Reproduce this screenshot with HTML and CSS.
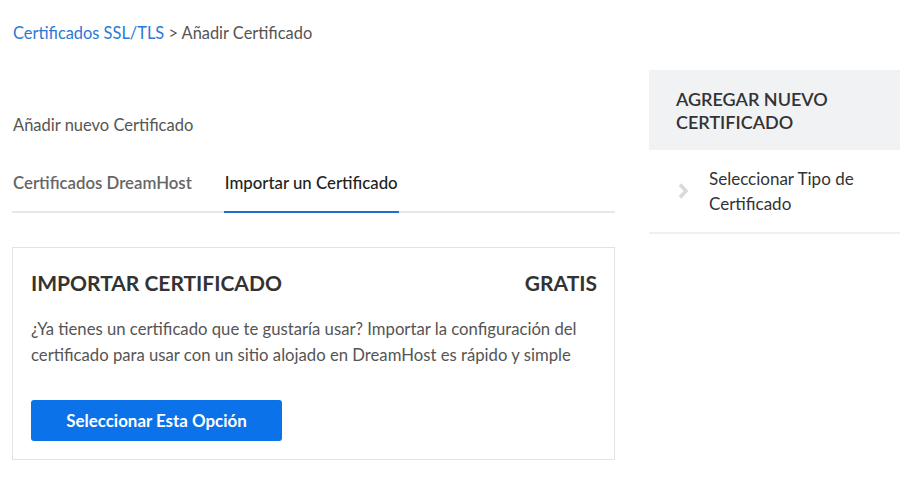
FILE: index.html
```html
<!DOCTYPE html>
<html>
<head>
  <title>Añadir Certificado</title>
  <link rel="stylesheet" href="styles.css">
</head>
<body>
  <div class="breadcrumb">
    <a href="#" class="crumb-link">Certificados SSL/TLS</a> &gt; Añadir Certificado
  </div>
  <div class="layout">
    <div class="main">
      <p class="subtitle">Añadir nuevo Certificado</p>
      <div class="tabs">
        <a href="#" class="tab">Certificados DreamHost</a>
        <a href="#" class="tab active">Importar un Certificado</a>
      </div>
      <div class="card">
        <div class="card-head">
          <h3>IMPORTAR CERTIFICADO</h3>
          <span class="price">GRATIS</span>
        </div>
        <p class="card-text">¿Ya tienes un certificado que te gustaría usar? Importar la configuración del certificado para usar con un sitio alojado en DreamHost es rápido y simple</p>
        <button type="button" class="btn">Seleccionar Esta Opción</button>
      </div>
    </div>
    <aside class="sidebar">
      <div class="side-head">AGREGAR NUEVO CERTIFICADO</div>
      <div class="side-step">
        <svg class="chevron" width="11" height="18" viewBox="0 0 11 18">
          <path d="M2 2.5 L8 9 L2 15.5" fill="none" stroke="#d9d9d9" stroke-width="3.6"/>
        </svg>
        <span>Seleccionar Tipo de Certificado</span>
      </div>
    </aside>
  </div>
</body>
</html>
```
FILE: styles.css
```css
body {
  font-family: Lato, "Open Sans", sans-serif;
  margin: 0;
  padding: 0;
  color: #555;
  background: #fff;
  overflow: hidden;
}
.breadcrumb {
  padding: 23px 0 0 13px;
  font-size: 16.4px;
  height: 47px;
  box-sizing: border-box;
}
.crumb-link {
  color: #2c78d4;
  text-decoration: none;
}
.layout {
  display: flex;
  gap: 34px;
}
.main {
  width: 603px;
  flex-shrink: 0;
  margin-left: 12px;
}
.subtitle {
  margin: 68px 0 0 1px;
  font-size: 16.5px;
  line-height: 20px;
  color: #555;
}
.tabs {
  display: flex;
  gap: 31px;
  margin-top: 38px;
  border-bottom: 2px solid #e8e8e8;
}
.tab {
  font-size: 16.8px;
  font-weight: 600;
  color: #666;
  text-decoration: none;
  padding: 0 1px 18px 1px;
  line-height: 20px;
  margin-bottom: -2px;
}
.tab.active {
  color: #222;
  font-weight: 500;
  border-bottom: 2px solid #1e6fd0;
}
.card {
  margin-top: 34px;
  border: 1px solid #e3e3e3;
  padding: 22px 17px 18px 18px;
}
.card-head {
  display: flex;
  justify-content: space-between;
  align-items: center;
}
.card-head h3 {
  margin: 0;
  font-size: 21px;
  font-weight: 700;
  color: #333;
}
.price {
  font-size: 21px;
  font-weight: 700;
  color: #333;
}
.card-text {
  margin: 21px 0 0 0;
  font-size: 16.7px;
  line-height: 26px;
  color: #555;
}
.btn {
  margin-top: 32px;
  width: 251px;
  height: 41px;
  background: #0b72e9;
  color: #fff;
  border: none;
  border-radius: 3px;
  font-family: inherit;
  font-size: 16.9px;
  font-weight: 700;
  cursor: pointer;
}
.sidebar {
  width: 260px;
  flex-shrink: 0;
  margin-top: 23px;
}
.side-head {
  background: #f1f2f4;
  padding: 18px 27px 16px 27px;
  font-size: 18px;
  font-weight: 600;
  line-height: 23px;
  color: #333;
}
.side-step {
  display: flex;
  align-items: center;
  gap: 20px;
  padding: 16px 20px 16px 29px;
  border-bottom: 2px solid #f0f0f0;
  font-size: 17px;
  line-height: 25px;
  color: #333;
}
.chevron {
  flex-shrink: 0;
}
```
